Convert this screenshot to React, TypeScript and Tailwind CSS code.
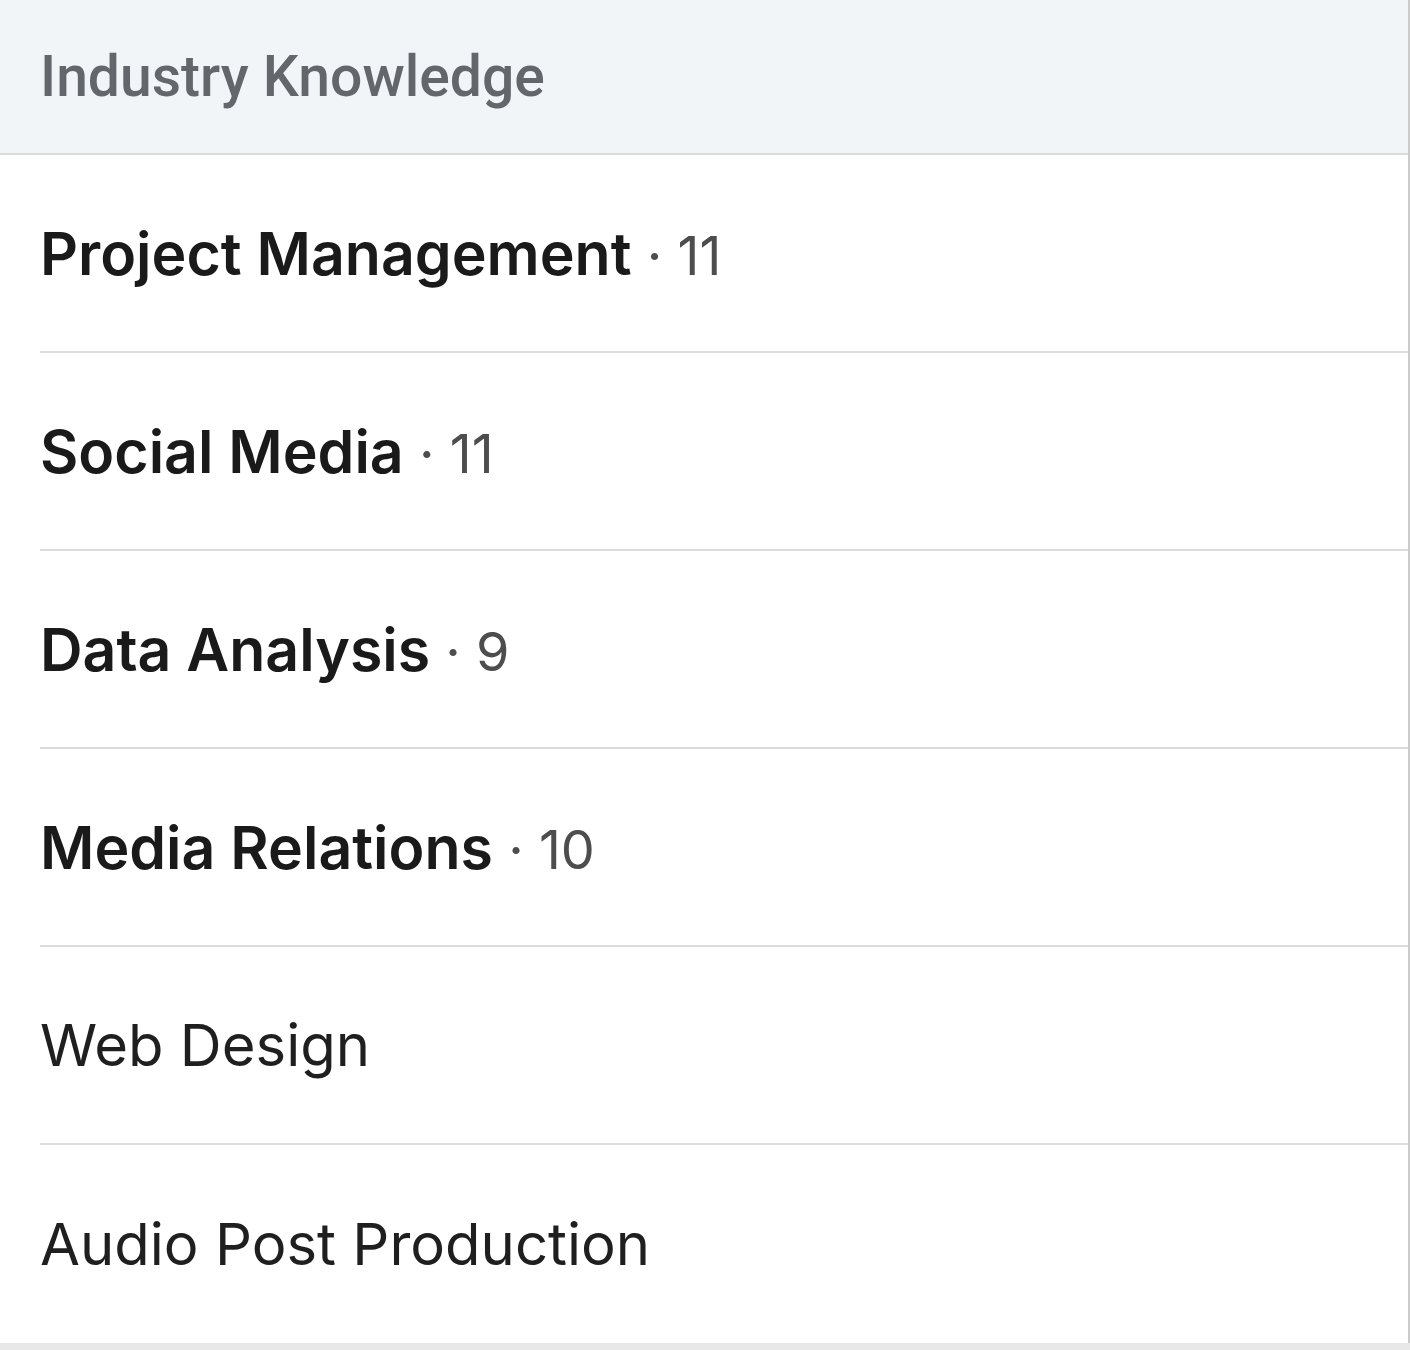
const skills = [
  { name: "Project Management", count: 11 },
  { name: "Social Media", count: 11 },
  { name: "Data Analysis", count: 9 },
  { name: "Media Relations", count: 10 },
  { name: "Web Design" },
  { name: "Audio Post Production" },
];

export default function App() {
  return (
    <div className="w-[1410px] h-[1350px] flex flex-col bg-[#e8e8e8]">
      <div className="flex-1 flex flex-col bg-white border-r-2 border-[#cbcbcb]">
        <div className="h-[155px] flex items-center px-10 bg-[#f2f5f7] border-b-2 border-[#d9dbdc] shrink-0">
          <span className="text-[57px] font-medium text-[#63666a] font-['Roboto',sans-serif] leading-none">
            Industry Knowledge
          </span>
        </div>
        <ul className="flex flex-col pl-10">
          {skills.map((s, i) => (
            <li
              key={s.name}
              className={`h-[198px] flex items-center font-['Inter',sans-serif] ${
                i < skills.length - 1 ? "border-b-2 border-[#dcdcdc]" : ""
              }`}
            >
              {s.count !== undefined ? (
                <span className="leading-none">
                  <span className="text-[59px] font-semibold text-[#1a1a1a]">{s.name}</span>
                  <span className="text-[54px] text-[#4d4d4d]"> · {s.count}</span>
                </span>
              ) : (
                <span className="text-[58px] text-[#1f1f1f] leading-none">{s.name}</span>
              )}
            </li>
          ))}
        </ul>
      </div>
      <div className="h-[10px] shrink-0" />
    </div>
  );
}
